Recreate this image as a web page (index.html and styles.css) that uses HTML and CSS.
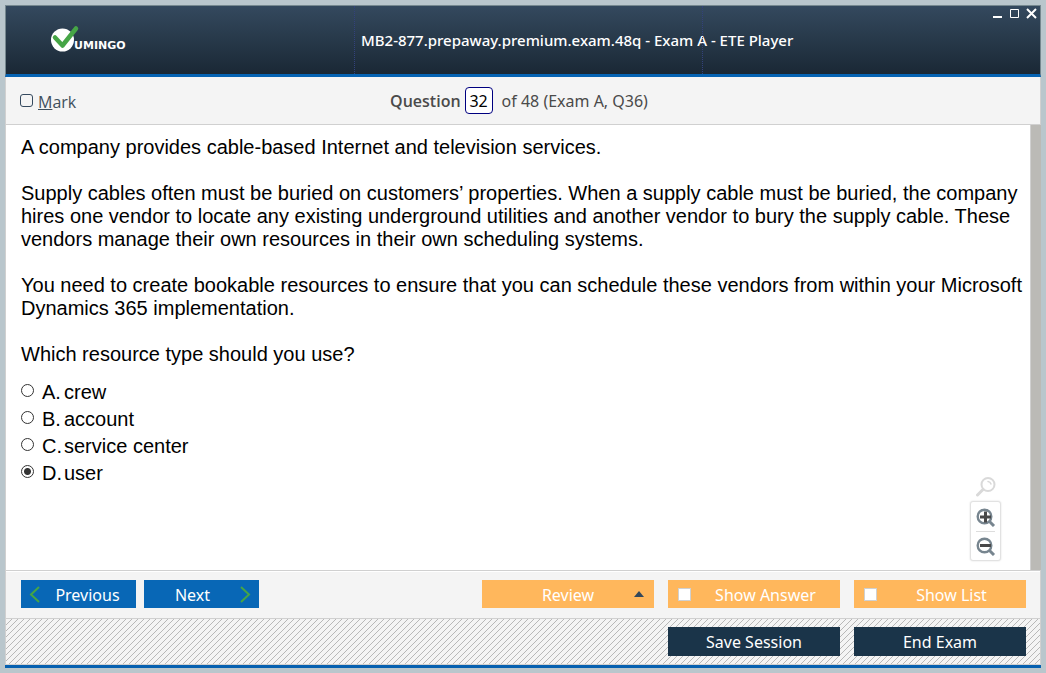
FILE: index.html
```html
<!DOCTYPE html>
<html lang="en">
<head>
<meta charset="utf-8">
<title>MB2-877.prepaway.premium.exam.48q - Exam A - ETE Player</title>
<link rel="stylesheet" href="styles.css">
</head>
<body>
<div class="window">
  <header class="titlebar">
    <div class="title-side">
      <svg class="logo" width="84" height="30" viewBox="0 0 84 30" role="img" aria-label="Vumingo">
        <circle cx="11.500" cy="15" r="11.500" fill="#fff"/>
        <path d="M4 12.500L11.500 20.500L25 3.500" fill="none" stroke="#46a546" stroke-width="4.500" stroke-linecap="round" stroke-linejoin="round"/>
        <text class="logo-text" x="23" y="24">UMINGO</text>
      </svg>
    </div>
    <h1 class="title">MB2-877.prepaway.premium.exam.48q - Exam A - ETE Player</h1>
    <div class="title-side title-side-end">
      <div class="window-controls">
        <button class="window-control" aria-label="Minimize"><svg width="11" height="11" viewBox="0 0 11 11"><path d="M1 9h9" stroke="#fff" stroke-width="2"/></svg></button>
        <button class="window-control" aria-label="Maximize"><svg width="11" height="11" viewBox="0 0 11 11"><path d="M1.500 1.500h8v8h-8z" fill="none" stroke="#fff"/></svg></button>
        <button class="window-control" aria-label="Close"><svg width="11" height="11" viewBox="0 0 11 11"><path d="M1 1l9 9M10 1l-9 9" stroke="#fff" stroke-width="2"/></svg></button>
      </div>
    </div>
  </header>

  <div class="question-bar">
    <label class="mark"><input class="mark-box" type="checkbox"><span><u>M</u>ark</span></label>
    <div class="position">
      <label class="position-label" for="question-number">Question</label>
      <input class="position-input" id="question-number" type="text" value="32">
      <span>of 48 (Exam A, Q36)</span>
    </div>
  </div>

  <main class="content">
    <div class="question">
      <p>A company provides cable-based Internet and television services.</p>
      <p>Supply cables often must be buried on customers’ properties. When a supply cable must be buried, the company hires one vendor to locate any existing underground utilities and another vendor to bury the supply cable. These vendors manage their own resources in their own scheduling systems.</p>
      <p>You need to create bookable resources to ensure that you can schedule these vendors from within your Microsoft Dynamics 365 implementation.</p>
      <p>Which resource type should you use?</p>
      <div class="answers">
        <label class="answer"><input class="answer-radio" type="radio" name="answer"><span class="letter">A.</span><span>crew</span></label>
        <label class="answer"><input class="answer-radio" type="radio" name="answer"><span class="letter">B.</span><span>account</span></label>
        <label class="answer"><input class="answer-radio" type="radio" name="answer"><span class="letter">C.</span><span>service center</span></label>
        <label class="answer"><input class="answer-radio" type="radio" name="answer" checked><span class="letter">D.</span><span>user</span></label>
      </div>
    </div>
    <div class="zoom-tools">
      <svg width="22" height="20" viewBox="0 0 22 20" fill="none" stroke="#d9d9d9" stroke-linecap="round"><circle cx="13" cy="7.500" r="6.500" stroke-width="2"/><path d="M13 4.500a3.500 3.500 0 0 1 3 2.500" stroke-width="1.500"/><path d="M8 12.500L2.500 18" stroke-width="3"/></svg>
      <div class="zoom-panel">
        <button class="zoom-button" aria-label="Zoom in"><svg width="20" height="20" viewBox="0 0 20 20" fill="none"><circle cx="8.500" cy="9.500" r="6.800" stroke="#77858f" stroke-width="2.400"/><path d="M13.500 14.500l4.500 4.500" stroke="#77858f" stroke-width="3"/><path d="M4 10h11M9.500 4.500v11" stroke="#484848" stroke-width="3"/></svg></button>
        <button class="zoom-button" aria-label="Zoom out"><svg width="20" height="20" viewBox="0 0 20 20" fill="none"><circle cx="8.500" cy="9.500" r="6.800" stroke="#77858f" stroke-width="2.400"/><path d="M13.500 14.500l4.500 4.500" stroke="#77858f" stroke-width="3"/><path d="M4 9.500h11" stroke="#484848" stroke-width="3"/></svg></button>
      </div>
    </div>
    <div class="scrollbar"></div>
  </main>

  <div class="nav-bar">
    <button class="button nav-button">
      <svg width="12" height="17" viewBox="0 0 12 17"><path d="M10 1L2 8.500L10 16" fill="none" stroke="#46a546" stroke-width="2"/></svg>
      <span class="button-text previous-text">Previous</span>
    </button>
    <button class="button nav-button">
      <span class="button-text next-text">Next</span>
      <svg width="12" height="17" viewBox="0 0 12 17"><path d="M2 1L10 8.500L2 16" fill="none" stroke="#46a546" stroke-width="2"/></svg>
    </button>
    <div class="spacer"></div>
    <button class="button option-button">
      <span class="button-text review-text">Review</span>
      <svg width="10" height="6" viewBox="0 0 10 6"><path d="M0 6L5 0L10 6z" fill="#33485b"/></svg>
    </button>
    <label class="button option-button"><input class="option-box" type="checkbox"><span class="button-text check-text">Show Answer</span></label>
    <label class="button option-button"><input class="option-box" type="checkbox"><span class="button-text check-text">Show List</span></label>
  </div>

  <footer class="session-bar">
    <button class="button session-button">Save Session</button>
    <button class="button session-button">End Exam</button>
  </footer>
</div>
</body>
</html>
```
FILE: styles.css
```css
* { box-sizing: border-box; }

body {
  margin: 0;
  padding: 5px;
  height: 100vh;
  background: #b9c6cc;
  font: 16px/20px "Noto Sans", "Open Sans", sans-serif;
  color: #4a4a4a;
}

button, input { font: inherit; margin: 0; }
button { border: 0; padding: 0; background: none; }
svg { display: block; flex: none; }

.window { display: flex; flex-direction: column; height: 100%; border-bottom: 3px solid #0560b0; }

.titlebar {
  display: grid;
  grid-template-columns: 35fr 35fr 34fr;
  min-height: 72px;
  background: linear-gradient(#34495e, #1a2835);
  border: 1px solid #76888f;
  border-bottom: 3px solid #0563b3;
}
.title-side { min-width: 0; padding: 19px 0 0 45px; }
.title-side-end { display: flex; justify-content: flex-end; align-items: flex-start; padding: 2px 3px 0 0; border-left: 1px dotted #33427c; }
.title {
  display: flex;
  align-items: center;
  min-width: 0;
  margin: 0;
  padding-left: 6px;
  border-left: 1px dotted #33427c;
  color: #fff;
  font: 500 15px/20px "Noto Sans", sans-serif;
  white-space: nowrap;
}
.logo-text { font: 700 11px "DejaVu Sans", sans-serif; fill: #fff; }
.window-controls { display: flex; gap: 6px; }
.window-control { width: 11px; height: 11px; }

.question-bar {
  display: flex;
  align-items: center;
  min-height: 48px;
  padding: 0 14px;
  background: #f4f4f4;
  border: 1px solid #d0d0d0;
  border-top: 0;
}
.question-bar::after { content: ""; flex: 1; }
.mark { display: flex; align-items: center; gap: 5px; flex: 1; padding-top: 2px; font-family: "Open Sans", sans-serif; color: #3f4f5c; }
.mark-box { appearance: none; width: 13px; height: 13px; margin-bottom: 2px; border: 1px solid #34495e; border-radius: 3px; }
.position { display: flex; align-items: center; gap: 4px; margin-right: 8px; }
.position-label { font-family: "Open Sans", sans-serif; font-weight: 600; }
.position-input { width: 28px; height: 27px; margin-right: 5px; padding: 0; text-align: center; border: 1px solid #000080; border-radius: 4px; background: #fff; color: #000; }

.content { position: relative; display: flex; flex: 1; min-height: 0; background: #fff; border-left: 1px solid #d0d0d0; }
.question { flex: 1; padding: 11px 0 0 15px; font: 20px/23px "Liberation Sans", Arial, sans-serif; color: #000; }
.question p { margin: 0 0 23px; }
.answers { margin-top: -10px; }
.answer { display: flex; align-items: center; height: 27px; }
.answer-radio { appearance: none; width: 13px; height: 13px; margin: 0 8px 4px 0; border: 1px solid #333; border-radius: 50%; background: #fff; }
.answer-radio:checked { background: radial-gradient(circle, #333 0 3px, #fff 4px); }
.letter { width: 22px; }
.scrollbar { width: 11px; background: #bbbab6; border-left: 1px solid #d0d0d0; }
.zoom-tools { position: absolute; right: 40px; bottom: 9px; display: flex; flex-direction: column; align-items: center; gap: 4px; }
.zoom-panel { padding: 0 5px; background: #fff; border: 1px solid #e2e2e2; border-radius: 3px; box-shadow: 0 0 2px #ddd; }
.zoom-button { display: grid; place-items: center; width: 19px; height: 29px; }
.zoom-button + .zoom-button { border-top: 1px solid #ddd; }

.nav-bar {
  display: flex;
  gap: 14px;
  min-height: 48px;
  padding: 9px 14px 0 15px;
  background: #f4f4f4;
  border: 1px solid #d0d0d0;
  border-bottom: 0;
  box-shadow: inset 0 1px #fff;
}
.button { display: flex; align-items: center; justify-content: center; height: 28px; color: #fff; font-size: 16px; white-space: nowrap; }
.button-text { flex: 1; padding-top: 2px; text-align: center; }
.nav-button { width: 115px; padding: 0 8px; background: #0867b6; }
.nav-button + .nav-button { margin-left: -6px; }
.previous-text { padding-left: 6px; }
.next-text { padding-right: 6px; }
.spacer { flex: 1; }
.option-button { width: 172px; padding: 0 10px; background: #ffb75c; }
.review-text { padding-left: 10px; }
.check-text { padding-left: 10px; }
.option-box { appearance: none; width: 13px; height: 13px; border: 1px solid #d0d0d0; background: #fff; }

.session-bar {
  display: flex;
  justify-content: flex-end;
  gap: 14px;
  min-height: 47px;
  padding: 8px 14px 0;
  background: #f4f4f4 url("data:image/svg+xml,%3Csvg xmlns='http://www.w3.org/2000/svg' width='6' height='6' shape-rendering='crispEdges'%3E%3Cpath d='M5 0h1v1h-1zM4 1h1v1h-1zM3 2h1v1h-1zM2 3h1v1h-1zM1 4h1v1h-1zM0 5h1v1h-1z' fill='%23b8b8b8'/%3E%3C/svg%3E");
  border: 1px solid #d0d0d0;
}
.session-button { width: 172px; height: 29px; background: #1a3449; }
```
